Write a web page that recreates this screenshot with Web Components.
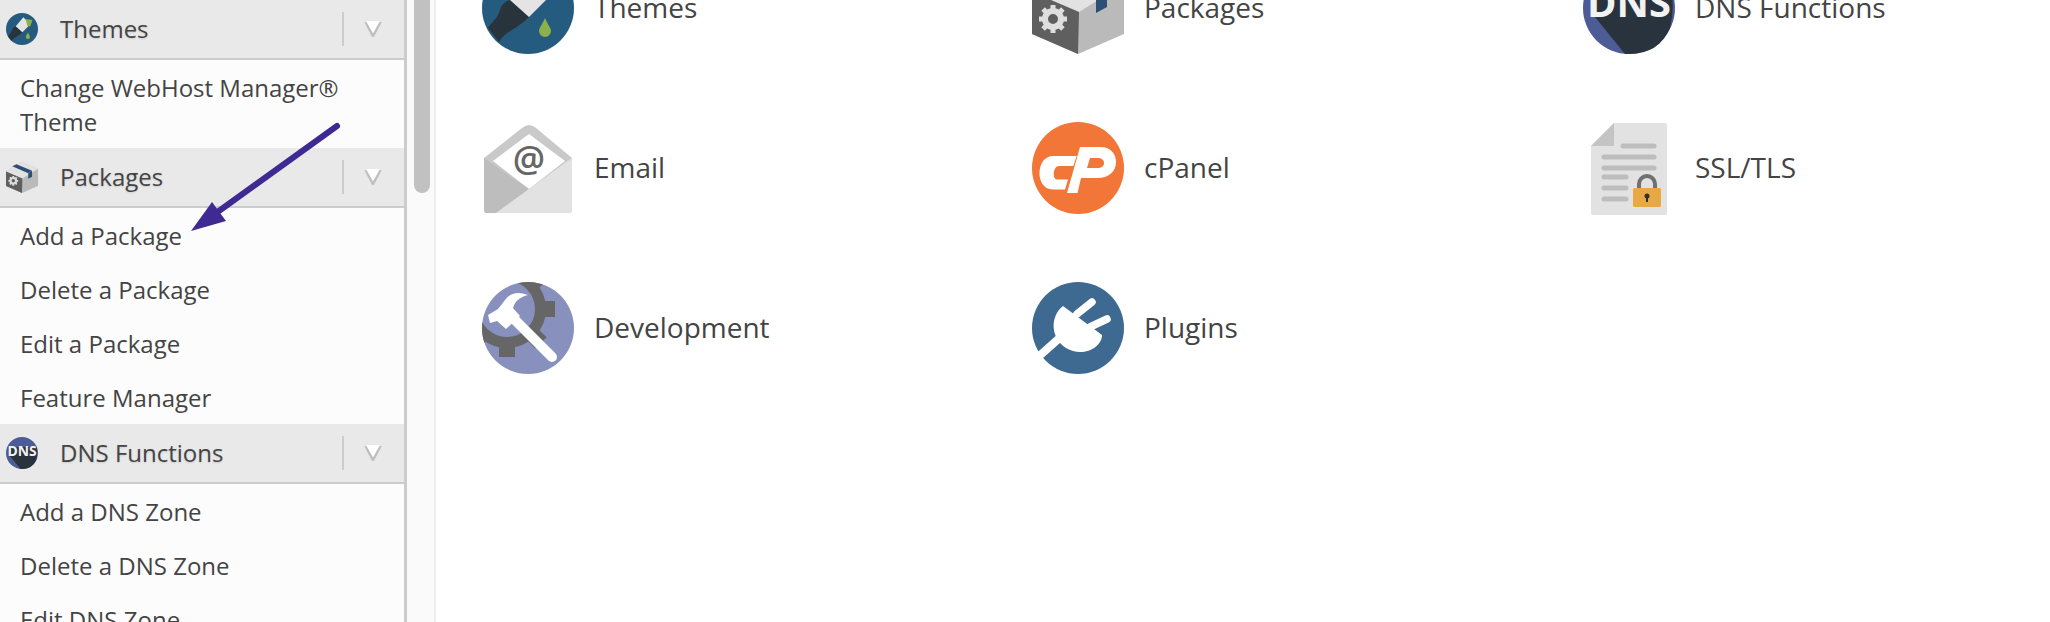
<!DOCTYPE html>
<html>
<head>
<meta charset="utf-8">
<title>WebHost Manager</title>
<style>
  html, body { margin: 0; height: 100%; background: #fff; overflow: hidden; }
  body { font-family: "Open Sans", "Noto Sans", sans-serif; color: #444; }
</style>
</head>
<body>
<whm-page>
  <whm-sidebar slot="sidebar">
    <whm-section icon="themes" label="Themes">
      <whm-item>Change WebHost Manager® Theme</whm-item>
    </whm-section>
    <whm-section icon="packages" label="Packages">
      <whm-item>Add a Package</whm-item>
      <whm-item>Delete a Package</whm-item>
      <whm-item>Edit a Package</whm-item>
      <whm-item>Feature Manager</whm-item>
    </whm-section>
    <whm-section icon="dns" label="DNS Functions">
      <whm-item>Add a DNS Zone</whm-item>
      <whm-item>Delete a DNS Zone</whm-item>
      <whm-item>Edit DNS Zone</whm-item>
    </whm-section>
  </whm-sidebar>
  <whm-tile icon="themes">Themes</whm-tile>
  <whm-tile icon="packages">Packages</whm-tile>
  <whm-tile icon="dns">DNS Functions</whm-tile>
  <whm-tile icon="email">Email</whm-tile>
  <whm-tile icon="cpanel">cPanel</whm-tile>
  <whm-tile icon="ssl">SSL/TLS</whm-tile>
  <whm-tile icon="development">Development</whm-tile>
  <whm-tile icon="plugins">Plugins</whm-tile>
</whm-page>

<script>
///////////////////    icons     //////////////////////////
const ICONS = {
	themes: `
		<circle cx="46" cy="46" r="46" fill="#265b80"/>
		<path d="M28 38 C22 40 19 44 18 48 C16 56 10 60 6 66 L17 80 C22 70 34 68 47 55 Z" fill="#28333c"/>
		<path d="M28 38 L50 12 L70 32 L47 55 Z" fill="#e4e4e4"/>
		<path d="M56 17 L76 20 L70 38 L62 38 Z" fill="#8cb04a"/>
		<path d="M63 56 C66 63 69 66 69 69 A6 6 0 0 1 57 69 C57 66 60 63 63 56 Z" fill="#8cb04a"/>`,
	packages: `
		<path d="M44 3 L92 22 L92 72 L46 92 L0 72 L0 30 Z" fill="#bababa"/>
		<path d="M44 3 L92 22 L47 50 L0 30 Z" fill="#e2e2e2"/>
		<path d="M0 30 L47 50 L46 92 L0 72 Z" fill="#5f5f5f"/>
		<path d="M18 15 L30 9 L75 28 L64 35 Z" fill="#2c5075"/>
		<path d="M64 35 L75 28 L75 45 L64 51 Z" fill="#2c5075"/>
		<g transform="translate(21 57)">
			<circle r="8" fill="none" stroke="#dedede" stroke-width="6"/>
			<path d="M-2.5 -14 H2.5 V-9 H-2.5 Z M-2.5 9 H2.5 V14 H-2.5 Z M-14 -2.5 V2.5 H-9 V-2.5 Z M9 -2.5 V2.5 H14 V-2.5 Z" fill="#dedede"/>
			<path d="M-2.5 -14 H2.5 V-9 H-2.5 Z M-2.5 9 H2.5 V14 H-2.5 Z M-14 -2.5 V2.5 H-9 V-2.5 Z M9 -2.5 V2.5 H14 V-2.5 Z" fill="#dedede" transform="rotate(45)"/>
		</g>`,
	dns: `
		<circle cx="46" cy="46" r="46" fill="#4d5b96"/>
		<path d="M12 30 L88 28 Q92 46 87 66 Q76 92 46 92 L42 92 L12 55 Z" fill="#29333d"/>
		<text x="46" y="55" text-anchor="middle" textLength="84" lengthAdjust="spacingAndGlyphs" font-family="Open Sans, sans-serif" font-weight="700" font-size="40" fill="#f2f2f2">DNS</text>`,
	email: `
		<path d="M47 3 Q50 3 54 6 L90 36 L90 88 Q90 91 87 91 L5 91 Q2 91 2 88 L2 36 L40 6 Q44 3 47 3 Z" fill="#c9c9c9"/>
		<path d="M47 12 L83 39 L47 67 L11 39 Z" fill="#fff"/>
		<path d="M2 36 L47 67 L14 91 L5 91 Q2 91 2 88 Z" fill="#bdbdbd"/>
		<path d="M47 67 L90 36 L90 88 Q90 91 87 91 L14 91 Z" fill="#e2e2e2"/>
		<text x="47" y="50" text-anchor="middle" font-family="Open Sans, sans-serif" font-weight="600" font-size="36" fill="#666">@</text>`,
	cpanel: `
		<circle cx="46" cy="46" r="46" fill="#f17637"/>
		<path d="M21.3 34 L44.7 34 L41.3 44 L27 44 C21 44 20 57 25 57.5 L36 57.5 L33 67.5 L21 67.5 C11 67.5 7 58 7.5 50 C8 42 12 34 21.3 34 Z" fill="#fff"/>
		<path d="M48 25 L68 25 C80 25 84 33 84 40 C84 50 76 56 66 56 L49 56 L45.5 71 L35 71 Z M58 36 L66 36 C74 36 74 46 66 46 L55 46 Z" fill="#fff" fill-rule="evenodd"/>`,
	ssl: `
		<path d="M31 1 L82 1 Q84 1 84 3 L84 91 Q84 93 82 93 L10 93 Q8 93 8 91 L8 24 Z" fill="#e2e2e2"/>
		<path d="M31 1 L31 24 L8 24 Z" fill="#c4c4c4"/>
		<g stroke="#bdbdbd" stroke-width="5" stroke-linecap="round">
			<path d="M40 24 H71 M21 35 H71 M21 46 H71 M21 55 H43 M21 66 H43 M21 77 H43"/>
		</g>
		<path d="M56 66 V62 A8 8 0 0 1 72 62 V66" fill="none" stroke="#707070" stroke-width="4"/>
		<rect x="50" y="66" width="28" height="19" rx="1.5" fill="#e8a945"/>
		<circle cx="64" cy="74" r="2.5" fill="#33302a"/>
		<rect x="63" y="74" width="2" height="6" fill="#33302a"/>`,
	development: `
		<defs><clipPath id="devclip"><circle cx="46" cy="46" r="46"/></clipPath></defs>
		<circle cx="46" cy="46" r="46" fill="#8891bd"/>
		<g clip-path="url(#devclip)">
			<g transform="translate(25 27)" fill="#666">
				<circle r="33.5" fill="none" stroke="#666" stroke-width="11"/>
				<rect x="38" y="-8" width="10" height="16"/>
				<rect x="38" y="-8" width="10" height="16" transform="rotate(45)"/>
				<rect x="38" y="-8" width="10" height="16" transform="rotate(-45)"/>
				<rect x="38" y="-8" width="10" height="16" transform="rotate(-90)"/>
				<rect x="38" y="-8" width="10" height="16" transform="rotate(90)"/>
				<rect x="38" y="-8" width="10" height="16" transform="rotate(135)"/>
				<rect x="38" y="-8" width="10" height="16" transform="rotate(180)"/>
			</g>
		</g>
		<path d="M29 34 L70 75" stroke="#fff" stroke-width="10" stroke-linecap="round"/>
		<path d="M6 33 L8 41 L15 39 L24 47 L38 34 L31 26 C33 19 38 15 46 13 C36 9 28 11 23 18 L16 27 Z" fill="#fff"/>`,
	plugins: `
		<circle cx="46" cy="46" r="46" fill="#3e6a92"/>
		<path d="M32 52 L5 76" stroke="#fff" stroke-width="8"/>
		<path d="M45 32 L60 20 M58 45 L75 37" stroke="#fff" stroke-width="7.5" stroke-linecap="round"/>
		<path d="M31 24 L70 53 C70 66 50 76 34 66 C18 56 18 34 31 24 Z" fill="#fff"/>`
};

class WhmIcon extends HTMLElement {
	constructor() {
		super();
		this.attachShadow({ mode: 'open' });
	}

	static get observedAttributes() {
		return ['name', 'size'];
	}

	render() {
		const size = this.getAttribute('size') || 92;
		const name = this.getAttribute('name');
		this.shadowRoot.innerHTML = `
			<style>
				:host { display: block; width: ${size}px; height: ${size}px; flex: none; }
				svg { display: block; width: 100%; height: 100%; overflow: visible; }
			</style>
			<svg viewBox="0 0 92 92">${ICONS[name] || ''}</svg>`;
	}

	attributeChangedCallback() {
		this.render();
	}
}
customElements.define('whm-icon', WhmIcon);

/////////////////      sidebar      ///////////////////////////
const itemTemplate = document.createElement('template');
itemTemplate.innerHTML = `
	<style>
		:host { display: block; padding: 11px 20px 9px; font-size: 24px; line-height: 34px; color: #444; }
	</style>
	<slot></slot>
`;

class WhmItem extends HTMLElement {
	constructor() {
		super();
		this.attachShadow({ mode: 'open' });
		this.shadowRoot.appendChild(itemTemplate.content.cloneNode(true));
	}
}
customElements.define('whm-item', WhmItem);

const sectionTemplate = document.createElement('template');
sectionTemplate.innerHTML = `
	<style>
		:host { display: block; }
		.head {
			display: flex;
			align-items: center;
			box-sizing: border-box;
			height: 60px;
			padding-left: 6px;
			background: #e9e9e9;
			border-bottom: 2px solid #ccc;
		}
		.name {
			flex: 1;
			margin: 0 0 1px 22px;
			font-size: 24px;
			color: #444;
			text-shadow: 0 1px 2px rgba(0, 0, 0, .12);
		}
		.sep { width: 2px; height: 34px; background: #ccc; }
		.caret { display: block; width: 18px; height: 16px; margin: 0 22px 0 20px; filter: blur(.5px); }
	</style>
	<div class="head">
		<whm-icon size="32"></whm-icon>
		<span class="name"></span>
		<span class="sep"></span>
		<svg class="caret" viewBox="0 0 18 16">
			<path d="M1.5 1 L9 15 L16.5 1" fill="none" stroke="#bfbfbf" stroke-width="2.5"/>
			<path d="M2 0 H16 L9 12 Z" fill="#fff"/>
		</svg>
	</div>
	<slot></slot>
`;

class WhmSection extends HTMLElement {
	constructor() {
		super();
		this.attachShadow({ mode: 'open' });
		this.shadowRoot.appendChild(sectionTemplate.content.cloneNode(true));
	}

	connectedCallback() {
		this.shadowRoot.querySelector('whm-icon').setAttribute('name', this.getAttribute('icon'));
		this.shadowRoot.querySelector('.name').textContent = this.getAttribute('label');
	}
}
customElements.define('whm-section', WhmSection);

const sidebarTemplate = document.createElement('template');
sidebarTemplate.innerHTML = `
	<style>
		:host { display: flex; flex: none; width: 436px; height: 622px; overflow: hidden; }
		.list { width: 404px; background: #fcfcfc; border-right: 3px solid #ccc; }
		.track { flex: 1; padding-left: 7px; background: #fafafa; border-right: 2px solid #eee; }
		.thumb { width: 16px; height: 193px; background: #c1c1c1; border-radius: 0 0 8px 8px; }
	</style>
	<div class="list"><slot></slot></div>
	<div class="track"><div class="thumb"></div></div>
`;

class WhmSidebar extends HTMLElement {
	constructor() {
		super();
		this.attachShadow({ mode: 'open' });
		this.shadowRoot.appendChild(sidebarTemplate.content.cloneNode(true));
	}
}
customElements.define('whm-sidebar', WhmSidebar);

/////////////////      main area     ////////////////////////////
const tileTemplate = document.createElement('template');
tileTemplate.innerHTML = `
	<style>
		:host { display: flex; align-items: center; height: 160px; font-size: 28px; color: #444; }
		whm-icon { margin-right: 20px; }
		.label { margin-bottom: 2px; }
	</style>
	<whm-icon></whm-icon>
	<span class="label"><slot></slot></span>
`;

class WhmTile extends HTMLElement {
	constructor() {
		super();
		this.attachShadow({ mode: 'open' });
		this.shadowRoot.appendChild(tileTemplate.content.cloneNode(true));
	}

	connectedCallback() {
		this.shadowRoot.querySelector('whm-icon').setAttribute('name', this.getAttribute('icon'));
	}
}
customElements.define('whm-tile', WhmTile);

const pageTemplate = document.createElement('template');
pageTemplate.innerHTML = `
	<style>
		:host { display: flex; position: relative; width: 2050px; height: 622px; overflow: hidden; }
		.grid {
			display: grid;
			grid-template-columns: 550px 551px 1fr;
			grid-auto-rows: 160px;
			flex: 1;
			margin: -72px 0 0 46px;
		}
		.arrow { position: absolute; left: 180px; top: 115px; }
	</style>
	<slot name="sidebar"></slot>
	<div class="grid"><slot></slot></div>
	<svg class="arrow" width="170" height="130" viewBox="180 115 170 130">
		<path d="M337 126 L212 216" stroke="#3f2a93" stroke-width="6" stroke-linecap="round" fill="none"/>
		<path d="M191 231 L212 202 L226 221 Z" fill="#3f2a93"/>
	</svg>
`;

class WhmPage extends HTMLElement {
	constructor() {
		super();
		this.attachShadow({ mode: 'open' });
		this.shadowRoot.appendChild(pageTemplate.content.cloneNode(true));
	}
}
customElements.define('whm-page', WhmPage);
</script>
</body>
</html>
